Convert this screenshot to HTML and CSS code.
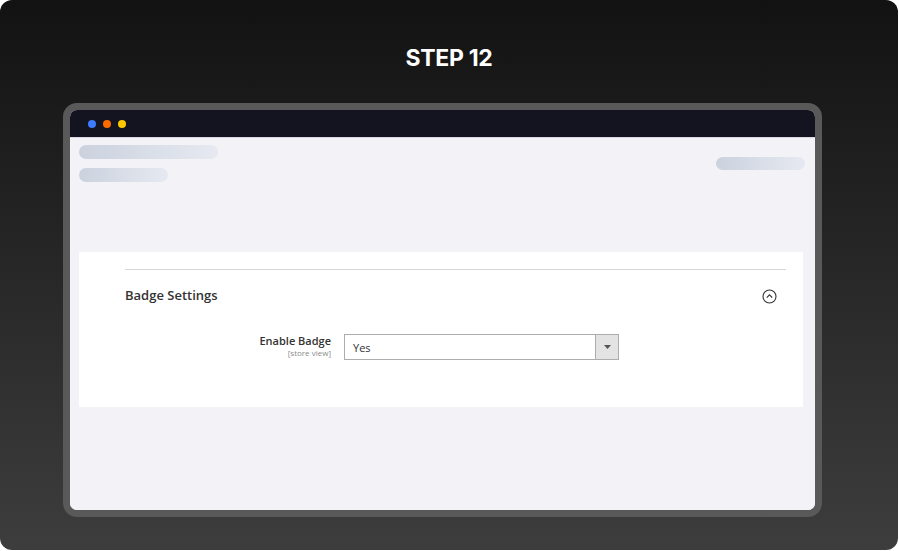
FILE: index.html
```html
<!DOCTYPE html>
<html lang="en">
<head>
    <meta charset="UTF-8">
    <title>Step 12</title>
    <link rel="stylesheet" href="styles.css">
</head>
<body>
    <div class="card">
        <h1 class="step-title">STEP 12</h1>

        <div class="frame">
            <div class="titlebar">
                <span class="dot dot-blue"></span>
                <span class="dot dot-orange"></span>
                <span class="dot dot-yellow"></span>
            </div>

            <div class="screen">
                <div class="page-head">
                    <div class="head-left">
                        <div class="skeleton sk-long"></div>
                        <div class="skeleton sk-short"></div>
                    </div>
                    <div class="skeleton sk-right"></div>
                </div>

                <div class="panel">
                    <div class="section-head">
                        <span class="section-title">Badge Settings</span>
                        <svg class="toggle-icon" width="15" height="15" viewBox="0 0 15 15">
                            <circle cx="7.5" cy="7.5" r="6.5" fill="none" stroke="#333" stroke-width="1.1"/>
                            <path d="M4.8 8.6 L7.5 5.9 L10.2 8.6" fill="none" stroke="#333" stroke-width="1.2"/>
                        </svg>
                    </div>

                    <div class="field">
                        <div class="field-label">
                            <span class="label-main">Enable Badge</span>
                            <span class="label-scope">[store view]</span>
                        </div>
                        <div class="select">
                            <span class="select-value">Yes</span>
                            <span class="select-btn">
                                <svg width="7" height="4" viewBox="0 0 7 4"><path d="M0 0 H7 L3.5 4 Z" fill="#555"/></svg>
                            </span>
                        </div>
                    </div>
                </div>
            </div>
        </div>
    </div>
</body>
</html>
```

FILE: styles.css
```css
* {
    margin: 0;
    padding: 0;
    box-sizing: border-box;
}

body {
    background: #ffffff;
    font-family: 'Open Sans', 'Liberation Sans', sans-serif;
}

.card {
    width: 898px;
    height: 550px;
    border-radius: 12px;
    background: linear-gradient(180deg, #121212 0%, #3d3d3d 100%);
    padding-top: 44px;
    overflow: hidden;
}

.step-title {
    text-align: center;
    color: #ffffff;
    font-family: 'Inter', 'Liberation Sans', sans-serif;
    font-size: 23px;
    font-weight: 700;
    letter-spacing: -0.3px;
    line-height: 28px;
    margin-bottom: 31px;
}

.frame {
    margin-left: 63px;
    width: 759px;
    height: 414px;
    border: 7px solid #595959;
    border-radius: 14px;
    background: #f3f3f7;
    overflow: hidden;
    display: flex;
    flex-direction: column;
}

.titlebar {
    height: 28px;
    background: #141421;
    display: flex;
    align-items: center;
    gap: 7px;
    padding-left: 18px;
    border-bottom: 1px solid #d9d9e3;
}

.dot {
    width: 8px;
    height: 8px;
    border-radius: 50%;
}

.dot-blue { background: #3d7bff; }
.dot-orange { background: #ff6a00; }
.dot-yellow { background: #ffc800; }

.screen {
    flex: 1;
    background: #f3f3f7;
    padding: 7px 10px 0 9px;
}

.page-head {
    display: flex;
    justify-content: space-between;
    align-items: center;
}

.head-left {
    display: flex;
    flex-direction: column;
    gap: 9px;
}

.skeleton {
    border-radius: 7px;
    background: linear-gradient(90deg, #cbd2de 0%, #e6e9f1 100%);
}

.sk-long { width: 139px; height: 14px; }
.sk-short { width: 89px; height: 14px; }
.sk-right { width: 89px; height: 13px; }

.panel {
    margin-top: 70px;
    margin-right: 2px;
    background: #ffffff;
    padding: 17px 17px 47px 46px;
}

.section-head {
    border-top: 1px solid #d6d6d6;
    height: 51px;
    display: flex;
    align-items: center;
    justify-content: space-between;
    padding-right: 9px;
    padding-top: 1px;
}

.section-title {
    color: #333333;
    font-size: 13px;
    font-weight: 600;
    margin-top: -1px;
}

.toggle-icon {
    display: block;
    margin-top: 1px;
}

.field {
    margin-top: 14px;
    display: flex;
    align-items: flex-start;
}

.field-label {
    width: 206px;
    margin-right: 13px;
    display: flex;
    flex-direction: column;
    align-items: flex-end;
    padding-top: 0;
}

.label-main {
    color: #333333;
    font-size: 11px;
    font-weight: 600;
    line-height: 14px;
}

.label-scope {
    color: #8a8a8a;
    font-size: 8px;
    line-height: 10px;
}

.select {
    width: 275px;
    height: 26px;
    border: 1px solid #adadad;
    display: flex;
    align-items: center;
    justify-content: space-between;
}

.select-value {
    padding-left: 8px;
    color: #333333;
    font-size: 11px;
}

.select-btn {
    width: 23px;
    height: 100%;
    background: #e3e3e3;
    border-left: 1px solid #adadad;
    display: flex;
    align-items: center;
    justify-content: center;
}

.select-btn svg {
    display: block;
}
```
